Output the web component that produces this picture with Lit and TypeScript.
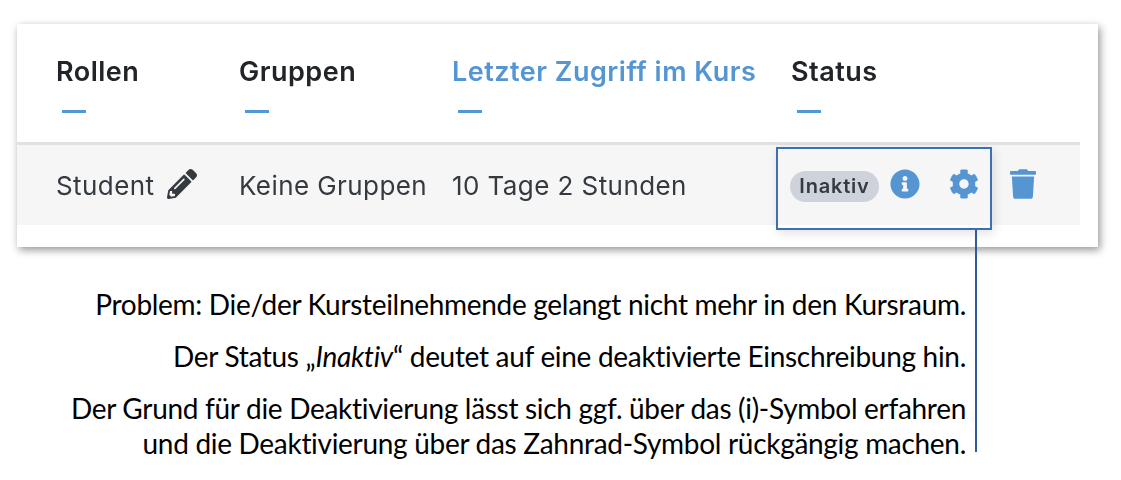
import { LitElement, css, html, svg, unsafeCSS } from "lit";
import { customElement } from "lit/decorators.js";

const BLUE = unsafeCSS("#5596d2");

const pencil = svg`<path d="M497.9 142.1l-46.1 46.1c-4.7 4.7-12.3 4.7-17 0l-111-111c-4.7-4.7-4.7-12.3 0-17l46.1-46.1c18.7-18.7 49.1-18.7 67.9 0l60.1 60.1c18.8 18.7 18.8 49.1 0 67.9zM284.2 99.8L21.6 362.4.4 483.9c-2.9 16.4 11.4 30.6 27.8 27.8l121.5-21.3 262.6-262.6c4.7-4.7 4.7-12.3 0-17l-111-111c-4.8-4.7-12.4-4.7-17.1 0zM124.1 339.9c-5.5-5.5-5.5-14.3 0-19.8l154-154c5.5-5.5 14.3-5.5 19.8 0s5.5 14.3 0 19.8l-154 154c-5.5 5.5-14.3 5.5-19.8 0zM88 424h48v36.3l-64.5 11.3-31.1-31.1L51.7 376H88v48z"/>`;
const info = svg`<path d="M256 8C119.043 8 8 119.083 8 256c0 136.997 111.043 248 248 248s248-111.003 248-248C504 119.083 392.957 8 256 8zm0 110c23.196 0 42 18.804 42 42s-18.804 42-42 42-42-18.804-42-42 18.804-42 42-42zm56 254c0 6.627-5.373 12-12 12h-88c-6.627 0-12-5.373-12-12v-24c0-6.627 5.373-12 12-12h12v-64h-12c-6.627 0-12-5.373-12-12v-24c0-6.627 5.373-12 12-12h64c6.627 0 12 5.373 12 12v100h12c6.627 0 12 5.373 12 12v24z"/>`;
const cog = svg`<path d="M487.4 315.7l-42.6-24.6c4.3-23.2 4.3-47 0-70.2l42.6-24.6c4.9-2.8 7.1-8.6 5.5-14-11.1-35.6-30-67.8-54.7-94.6-3.8-4.1-10-5.1-14.8-2.3L380.8 110c-17.9-15.4-38.5-27.3-60.8-35.1V25.8c0-5.6-3.9-10.5-9.4-11.7-36.7-8.2-74.3-7.8-109.2 0-5.5 1.2-9.4 6.1-9.4 11.7V75c-22.2 7.9-42.8 19.8-60.8 35.1L88.7 85.5c-4.9-2.8-11-1.9-14.8 2.3-24.7 26.7-43.6 58.9-54.7 94.6-1.7 5.4.6 11.2 5.5 14L67.3 221c-4.3 23.2-4.3 47 0 70.2l-42.6 24.6c-4.9 2.8-7.1 8.6-5.5 14 11.1 35.6 30 67.8 54.7 94.6 3.8 4.1 10 5.1 14.8 2.3l42.6-24.6c17.9 15.4 38.5 27.3 60.8 35.1v49.2c0 5.6 3.9 10.5 9.4 11.7 36.7 8.2 74.3 7.8 109.2 0 5.5-1.2 9.4-6.1 9.4-11.7v-49.2c22.2-7.9 42.8-19.8 60.8-35.1l42.6 24.6c4.9 2.8 11 1.9 14.8-2.3 24.7-26.7 43.6-58.9 54.7-94.6 1.5-5.5-.7-11.3-5.6-14.1zM256 336c-44.1 0-80-35.9-80-80s35.9-80 80-80 80 35.9 80 80-35.9 80-80 80z"/>`;
const trash = svg`<path d="M432 32H312l-9.4-18.7A24 24 0 0 0 281.1 0H166.8a23.72 23.72 0 0 0-21.4 13.3L136 32H16A16 16 0 0 0 0 48v32a16 16 0 0 0 16 16h416a16 16 0 0 0 16-16V48a16 16 0 0 0-16-16zM53.2 467a48 48 0 0 0 47.9 45h245.8a48 48 0 0 0 47.9-45L416 128H32z"/>`;

const columns = [
  { label: "Rollen" },
  { label: "Gruppen" },
  { label: "Letzter Zugriff im Kurs", active: true },
  { label: "Status" },
];

@customElement("app-root")
export class AppRoot extends LitElement {
  static styles = css`
    :host {
      display: block;
      position: relative;
      width: 1121px;
      height: 480px;
      background: #fff;
      overflow: hidden;
    }

    .card {
      position: absolute;
      left: 17px;
      top: 24px;
      width: 1081px;
      height: 223px;
      background: #fff;
      box-shadow: 2px 3px 8px rgba(0, 0, 0, 0.42);
    }

    .table {
      width: 1063px;
      font-family: Inter, sans-serif;
      filter: blur(0.5px);
    }

    .cols {
      display: grid;
      grid-template-columns: 222px 213px 339px 1fr;
    }

    .head {
      height: 118px;
      border-bottom: 3px solid #dee2e6;
    }

    .head .cell {
      display: flex;
      flex-direction: column;
      align-items: flex-start;
      padding-top: 33px;
      color: #212529;
      font-size: 27px;
      font-weight: 600;
      line-height: 30px;
      letter-spacing: 0.5px;
      white-space: nowrap;
    }

    .head .cell:first-child,
    .row .cell:first-child {
      padding-left: 39px;
    }

    .head .active {
      color: ${BLUE};
    }

    .dash {
      width: 24px;
      height: 3px;
      margin: 23px 0 0 6px;
      background: ${BLUE};
    }

    .row {
      height: 80px;
      background: #f6f6f6;
      align-items: center;
      color: #343a40;
      font-size: 26px;
      letter-spacing: 0.42px;
    }

    .cell.with-icon {
      display: flex;
      align-items: center;
      gap: 13px;
    }

    .actions {
      display: flex;
      align-items: center;
    }

    .badge {
      width: 89px;
      height: 31px;
      margin-left: -1px;
      margin-top: 3px;
      border-radius: 16px;
      background: #ced3db;
      color: #343a40;
      font-size: 20px;
      font-weight: 600;
      letter-spacing: 0.8px;
      line-height: 31px;
      text-align: center;
    }

    svg {
      display: block;
      height: 30px;
      margin-top: -2px;
      fill: ${BLUE};
    }

    .pencil {
      width: 30px;
      margin-top: -3px;
      fill: #343a40;
    }

    .info,
    .cog {
      width: 30px;
    }

    .info {
      margin-left: 11px;
    }

    .cog {
      margin-left: 29px;
    }

    .trash {
      width: 26px;
      margin-left: 31px;
    }

    /* callout frame over the status cell */
    .frame {
      position: absolute;
      left: 776px;
      top: 147px;
      width: 216px;
      height: 83px;
      box-sizing: border-box;
      border: 2px solid #3e6fb0;
      box-shadow: 2px 3px 10px rgba(0, 0, 0, 0.12);
    }

    .leader {
      position: absolute;
      left: 975px;
      top: 230px;
      width: 2px;
      height: 222px;
      background: #2f5a9c;
    }

    .notes {
      position: absolute;
      right: 155px;
      top: 287px;
      width: 920px;
      text-align: right;
      color: #000;
      font-family: Lato, sans-serif;
      font-size: 28px;
      line-height: 35px;
      letter-spacing: -0.3px;
    }

    .notes p {
      margin: 0 0 17px;
    }

    .notes p:last-child {
      margin: 0;
    }
  `;

  render() {
    return html`
      <div class="card">
        <div class="table">
          <div class="cols head">
            ${columns.map(
              (c) => html`<div class="cell ${c.active ? "active" : ""}">
                ${c.label}<span class="dash"></span>
              </div>`,
            )}
          </div>
          <div class="cols row">
            <div class="cell with-icon">
              Student
              <svg class="pencil" viewBox="0 0 512 512">${pencil}</svg>
            </div>
            <div class="cell">Keine Gruppen</div>
            <div class="cell">10 Tage 2 Stunden</div>
            <div class="cell actions">
              <span class="badge">Inaktiv</span>
              <svg class="info" viewBox="0 0 512 512">${info}</svg>
              <svg class="cog" viewBox="0 0 512 512">${cog}</svg>
              <svg class="trash" viewBox="0 0 448 512">${trash}</svg>
            </div>
          </div>
        </div>
      </div>
      <div class="frame"></div>
      <div class="leader"></div>
      <div class="notes">
        <p>Problem: Die/der Kursteilnehmende gelangt nicht mehr in den Kursraum.</p>
        <p>Der Status „<em>Inaktiv</em>“ deutet auf eine deaktivierte Einschreibung hin.</p>
        <p>
          Der Grund für die Deaktivierung lässt sich ggf. über das (i)-Symbol erfahren<br />
          und die Deaktivierung über das Zahnrad-Symbol rückgängig machen.
        </p>
      </div>
    `;
  }
}
